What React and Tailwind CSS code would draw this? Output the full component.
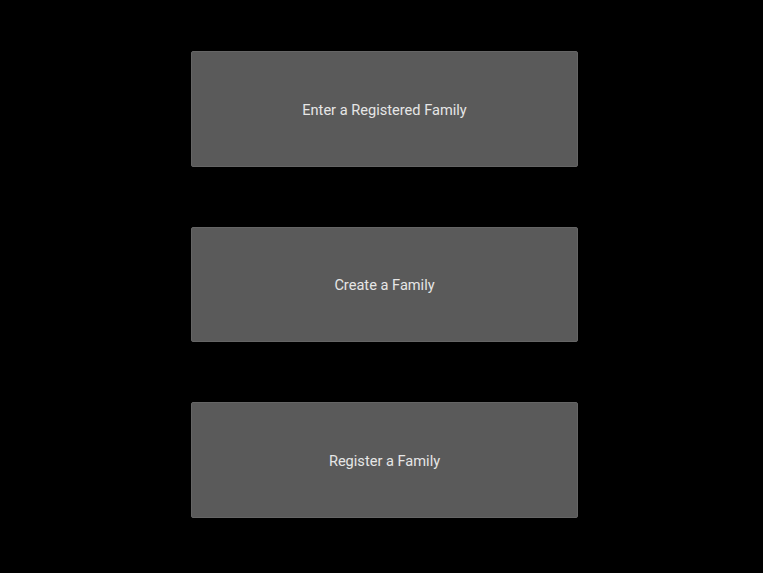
export default function App() {
  const items = ["Enter a Registered Family", "Create a Family", "Register a Family"];
  return (
    <div className="min-h-[573px] w-full bg-black pt-[51px] pl-[191px]" style={{ fontFamily: "Roboto, 'Liberation Sans', sans-serif" }}>
      <div className="flex flex-col gap-[60px]">
        {items.map((t) => (
          <button
            key={t}
            className="flex h-[115.5px] w-[387px] items-center justify-center rounded-[2px] border border-[#656565] bg-[#5a5a5a] pt-[4px] text-[14.6px] text-[#e6e6e6]"
          >
            {t}
          </button>
        ))}
      </div>
    </div>
  );
}
